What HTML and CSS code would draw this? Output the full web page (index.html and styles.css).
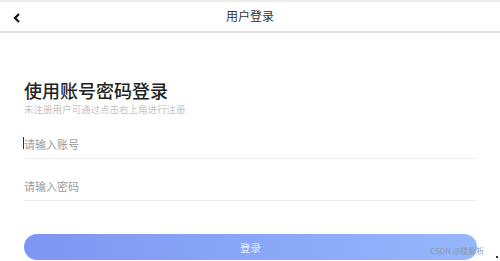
FILE: index.html
```html
<!DOCTYPE html>
<html lang="zh">
<head>
<meta charset="utf-8">
<link rel="stylesheet" href="styles.css">
</head>
<body>
<div class="page">
  <header class="nav">
    <svg class="back" width="8" height="10" viewBox="0 0 8 10"><path d="M6 1 L2 5 L6 9" fill="none" stroke="#111" stroke-width="2.2"/></svg>
    <div class="nav-title">用户登录</div>
  </header>
  <main class="form">
    <h1 class="title">使用账号密码登录</h1>
    <p class="sub">未注册用户可通过点击右上角进行注册</p>
    <div class="field first"><span class="caret"></span><span class="ph">请输入账号</span></div>
    <div class="field"><span class="ph">请输入密码</span></div>
    <div class="btn">登录</div>
  </main>
  <div class="mark">CSDN @楼解析</div>
  <div class="dot"></div>
</div>
</body>
</html>
```
FILE: styles.css
```css
* { box-sizing: border-box; margin: 0; padding: 0; }
html, body { width: 500px; height: 261px; overflow: hidden; background: #fff; }
body { font-family: "Noto Sans CJK SC", "Noto Sans", sans-serif; }
.page { position: relative; width: 500px; height: 261px; border-top: 2px solid #ececec; }
.nav { position: relative; height: 31px; border-bottom: 2px solid #e2e2e2; display: flex; align-items: center; justify-content: center; }
.back { position: absolute; left: 13px; top: 11px; }
.nav-title { font-size: 12px; color: #333; line-height: 1; margin-top: -1px; }
.form { padding: 0 23px 0 24px; display: flex; flex-direction: column; }
.title { font-size: 18px; font-weight: 500; color: #222; line-height: 22px; margin-top: 46px; }
.sub { font-size: 9.5px; color: #c4c4c4; line-height: 12px; margin-top: 2px; }
.field { position: relative; height: 42px; border-bottom: 1px solid #ececec; display: flex; align-items: flex-end; padding-bottom: 8px; }
.field.first { margin-top: 2px; }
.ph { font-size: 11px; color: #9c9c9c; line-height: 1; }
.caret { position: absolute; left: -1px; bottom: 9px; width: 1px; height: 12px; background: #333; }
.btn { margin-top: 33px; height: 26px; border-radius: 13px; background: linear-gradient(90deg, #7f95f2 0%, #88a7f7 50%, #95b7fb 100%); color: #e6ecfc; font-size: 10.5px; display: flex; align-items: center; justify-content: center; }
.mark { position: absolute; left: 430px; top: 245px; font-size: 8px; color: #8d97ad; line-height: 1; }
.dot { position: absolute; left: 496px; top: 254px; width: 2px; height: 2px; background: #333; }
```
